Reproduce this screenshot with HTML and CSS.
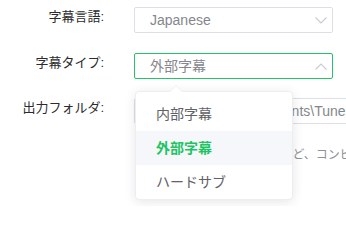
FILE: index.html
```html
<!DOCTYPE html>
<html lang="ja">
<head>
<meta charset="utf-8">
<link rel="stylesheet" href="styles.css">
</head>
<body>
<div class="form">
  <div class="row">
    <div class="label">字幕言語:</div>
    <div class="select">
      <span class="value">Japanese</span>
      <svg class="chev" width="12" height="7" viewBox="0 0 12 7"><polyline points="0.5,0.5 6,6 11.5,0.5" fill="none" stroke="#c8cbd2" stroke-width="1.1"/></svg>
    </div>
  </div>
  <div class="row">
    <div class="label">字幕タイプ:</div>
    <div class="select active">
      <span class="value">外部字幕</span>
      <svg class="chev" width="12" height="7" viewBox="0 0 12 7"><polyline points="0.5,6.5 6,1 11.5,6.5" fill="none" stroke="#c8cbd2" stroke-width="1.1"/></svg>
    </div>
  </div>
  <div class="row">
    <div class="label">出力フォルダ:</div>
    <div class="input"><span class="value">C:\Users\user\Documents\Tuneboto</span></div>
  </div>
  <div class="hint">字幕を動画へと焼き付けるなど、コンビネーション</div>

  <div class="dropdown">
    <div class="item">内部字幕</div>
    <div class="item selected">外部字幕</div>
    <div class="item">ハードサブ</div>
  </div>
</div>
</body>
</html>
```

FILE: styles.css
```css
html, body {
  margin: 0;
  padding: 0;
  background: #ffffff;
}
body {
  width: 346px;
  height: 206px;
  overflow: hidden;
  font-family: "Liberation Sans", "Noto Sans CJK JP", sans-serif;
}
.form {
  position: relative;
  padding-top: 7px;
}
.row {
  display: flex;
  align-items: flex-start;
  height: 26px;
  margin-bottom: 20px;
}
.row:nth-child(2) {
  margin-bottom: 19px;
}
.label {
  width: 104px;
  flex: none;
  text-align: right;
  font-size: 13px;
  line-height: 20px;
  color: #2b2b2b;
  white-space: nowrap;
}
.select, .input {
  margin-left: 30px;
  box-sizing: border-box;
  height: 26px;
  border: 1px solid #dcdfe6;
  border-radius: 2px;
  display: flex;
  align-items: center;
  padding-left: 15px;
  flex: none;
}
.select {
  width: 199px;
  justify-content: space-between;
}
.select.active {
  border-color: #22c466;
}
.input {
  width: 320px;
  overflow: hidden;
  border-radius: 2px 0 0 2px;
}
.value {
  font-size: 14px;
  line-height: 20px;
  color: #85878c;
  white-space: nowrap;
}
.chev {
  margin-right: 5px;
  flex: none;
}
.hint {
  margin-left: 137px;
  margin-top: 22px;
  font-size: 12px;
  line-height: 18px;
  color: #8e9196;
  white-space: nowrap;
}
.dropdown {
  position: absolute;
  left: 135px;
  top: 91px;
  width: 158px;
  box-sizing: border-box;
  background: #ffffff;
  border: 1px solid #eceef3;
  border-radius: 4px;
  box-shadow: 0 2px 12px rgba(0, 0, 0, 0.1);
  padding: 5px 0 0;
}
.dropdown::before,
.dropdown::after {
  content: "";
  position: absolute;
  left: 34px;
  width: 0;
  height: 0;
  border-left: 6px solid transparent;
  border-right: 6px solid transparent;
}
.dropdown::before {
  top: -7px;
  border-bottom: 6px solid #eceef3;
}
.dropdown::after {
  top: -6px;
  border-bottom: 6px solid #ffffff;
}
.item {
  height: 34px;
  line-height: 34px;
  padding: 0 20px;
  font-size: 14px;
  color: #606266;
  white-space: nowrap;
}
.item.selected {
  background: #f5f7fa;
  color: #1dc463;
  font-weight: bold;
}
```
